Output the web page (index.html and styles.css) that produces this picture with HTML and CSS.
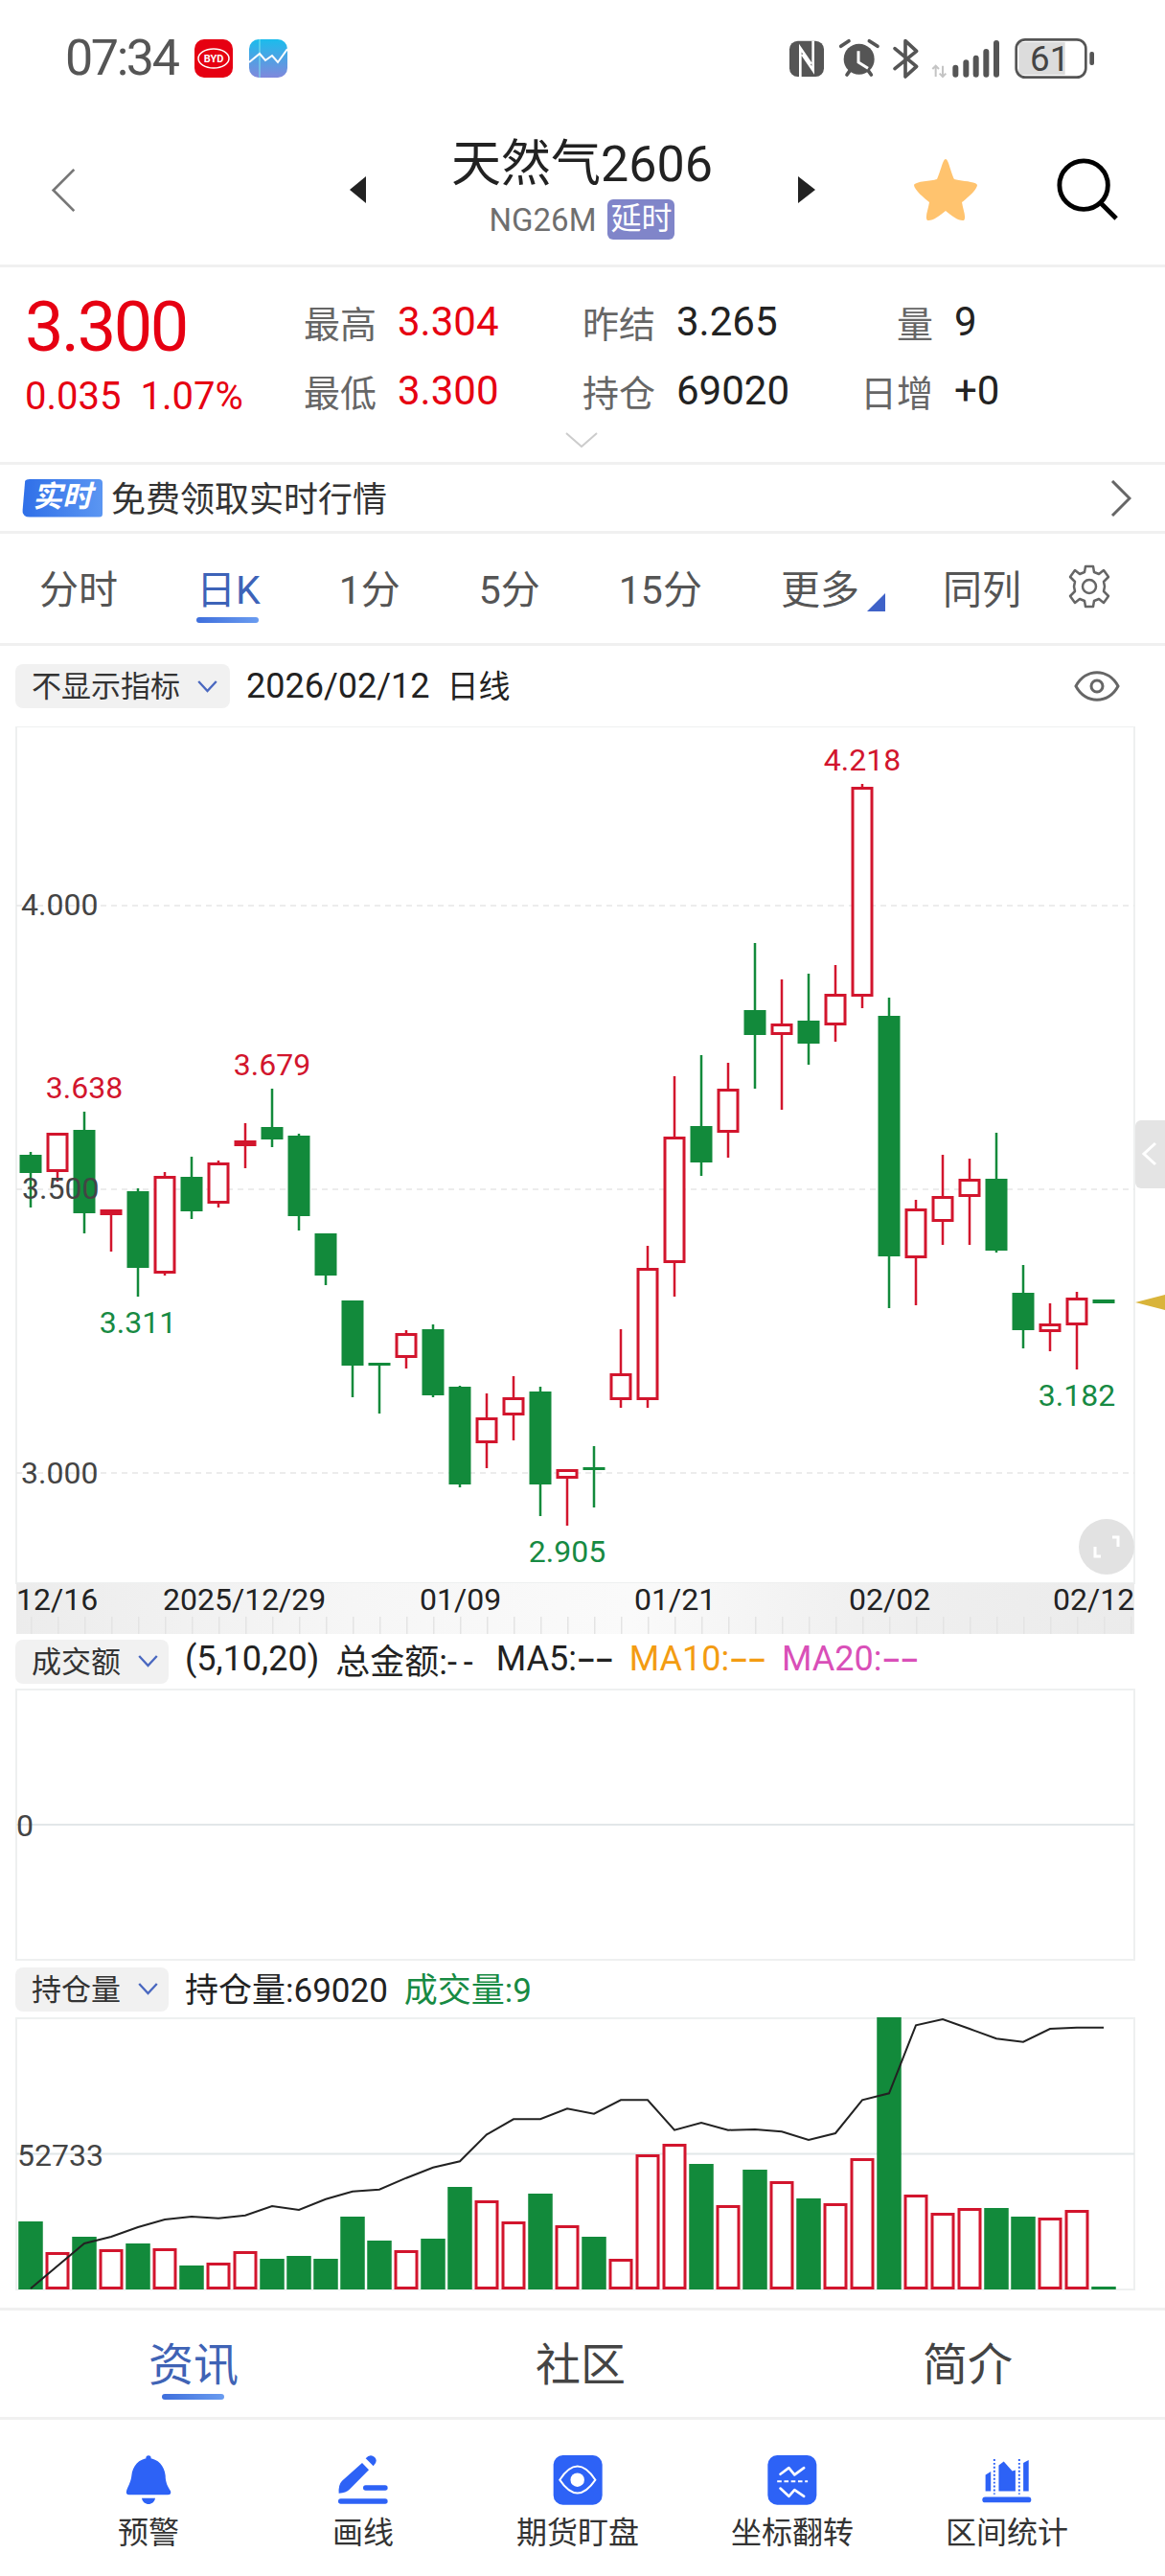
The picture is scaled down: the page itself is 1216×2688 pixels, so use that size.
FILE: index.html
```html
<!DOCTYPE html>
<html lang="zh-CN">
<head>
    <meta charset="UTF-8">
    <meta name="viewport" content="width=device-width, initial-scale=1.0">
    <title>天然气2606</title>
    <link rel="stylesheet" href="styles.css">
</head>
<body>
    <!-- Status Bar -->
    <div class="status-bar">
        <div class="status-left">
            <span class="clock">07:34</span>
            <svg class="app-icon" viewBox="0 0 40 40">
                <rect width="40" height="40" rx="10" fill="#e60012"/>
                <ellipse cx="20" cy="20" rx="16" ry="10" fill="none" stroke="#fff" stroke-width="1.5"/>
                <text class="byd-text" x="20" y="24" text-anchor="middle">BYD</text>
            </svg>
            <svg class="app-icon" viewBox="0 0 40 40">
                <defs>
                    <linearGradient id="stockBg" x1="0" y1="0" x2="0" y2="1">
                        <stop offset="0" stop-color="#1bbcec"/>
                        <stop offset="1" stop-color="#8088dc"/>
                    </linearGradient>
                </defs>
                <rect width="40" height="40" rx="10" fill="url(#stockBg)"/>
                <path d="M11 0V40" stroke="#7fe6ee" stroke-width="1"/>
                <path d="M0 24L11 15L17 22L24 17L30 24L40 10" fill="none" stroke="#fff" stroke-width="2"/>
            </svg>
        </div>
        <svg class="status-icons" viewBox="0 0 1020 180">
            <rect x="42" y="38" width="108" height="112" rx="26" fill="#555"/>
            <path d="M76 150V60L110 110M116 38V130L82 80" fill="none" stroke="#fff" stroke-width="8"/>
            <circle cx="260" cy="95" r="48" fill="#555"/>
            <path d="M203 55L228 38M292 38L318 55M222 144L232 130M298 144L288 130" stroke="#555" stroke-width="11" stroke-linecap="round"/>
            <path d="M258 70V105L288 124" fill="none" stroke="#fff" stroke-width="9"/>
            <path d="M372 62L440 118L405 150V38L440 70L372 125" fill="none" stroke="#555" stroke-width="11" stroke-linecap="round" stroke-linejoin="round"/>
            <path d="M500 150V116M490 126L500 116L510 126M522 116V150M512 140L522 150L532 140" fill="none" stroke="#c4c4c4" stroke-width="6"/>
            <path d="M562 122V143M595 106V143M626 92V143M658 72V143M690 45V143" stroke="#555" stroke-width="18" stroke-linecap="round"/>
            <rect x="760" y="42" width="145" height="102" fill="#dcdcdc"/>
            <rect x="752" y="34" width="218" height="118" rx="28" fill="none" stroke="#555" stroke-width="8"/>
            <text class="battery-text" x="857" y="133" text-anchor="middle">61</text>
            <rect x="982" y="72" width="14" height="42" rx="6" fill="#555"/>
        </svg>
    </div>

    <!-- Header -->
    <header class="top-header">
        <svg class="back-icon" viewBox="0 0 30 52">
            <path d="M27 2L3 26L27 50" fill="none" stroke="#777" stroke-width="3"/>
        </svg>
        <div class="title-group">
            <span class="arrow-left"></span>
            <div class="title-block">
                <h1>天然气2606</h1>
                <div class="code-line">
                    <span>NG26M</span>
                    <span class="delay-tag">延时</span>
                </div>
            </div>
            <span class="arrow-right"></span>
        </div>
        <div class="header-actions">
            <svg class="star-icon" viewBox="0 0 66 66">
                <path d="M33 1C36 1 38 14 42 22C48 24 64 24 66 28C66 33 55 42 50 46C51 53 55 62 52 65C47 66 39 60 33 55C27 60 19 66 14 65C11 62 15 53 16 46C11 42 0 33 0 28C2 24 18 24 24 22C28 14 30 1 33 1Z" fill="#ffc36e"/>
            </svg>
            <svg class="search-icon" viewBox="0 0 68 68">
                <circle cx="30" cy="29" r="26" fill="none" stroke="#000" stroke-width="5"/>
                <path d="M49 49L65 65" stroke="#000" stroke-width="5"/>
            </svg>
        </div>
    </header>

    <!-- Quote -->
    <section class="quote">
        <div class="quote-main">
            <div class="price">3.300</div>
            <div class="change"><span>0.035</span><span>1.07%</span></div>
        </div>
        <div class="quote-grid">
            <span class="q-label">最高</span><span class="q-value red">3.304</span>
            <span class="q-label">昨结</span><span class="q-value">3.265</span>
            <span class="q-label">量</span><span class="q-value">9</span>
            <span class="q-label">最低</span><span class="q-value red">3.300</span>
            <span class="q-label">持仓</span><span class="q-value">69020</span>
            <span class="q-label">日增</span><span class="q-value">+0</span>
        </div>
        <svg class="quote-more" viewBox="0 0 34 16">
            <path d="M1 1L17 15L33 1" fill="none" stroke="#ccc" stroke-width="2"/>
        </svg>
    </section>

    <!-- Realtime Banner -->
    <div class="banner">
        <span class="realtime-tag">实时</span>
        <span class="banner-text">免费领取实时行情</span>
        <svg class="banner-arrow" viewBox="0 0 22 38">
            <path d="M2 1L20 19L2 37" fill="none" stroke="#666" stroke-width="3"/>
        </svg>
    </div>

    <!-- Period Tabs -->
    <nav class="period-tabs">
        <a>分时</a>
        <a class="active">日K</a>
        <a>1分</a>
        <a>5分</a>
        <a>15分</a>
        <a class="more">更多</a>
        <a>同列</a>
        <svg class="gear-icon" viewBox="0 0 46 46">
            <path d="M19 2H27L28 8L33 10L38 6L43 13L38 18L39 23L38 28L43 33L38 40L33 36L28 38L27 44H19L18 38L13 36L8 40L3 33L8 28L7 23L8 18L3 13L8 6L13 10L18 8Z" fill="none" stroke="#666" stroke-width="2.5" stroke-linejoin="round"/>
            <circle cx="23" cy="23" r="7" fill="none" stroke="#666" stroke-width="2.5"/>
        </svg>
    </nav>

    <!-- Indicator Row -->
    <div class="info-row first">
        <div class="chip wide"><span class="chip-text">不显示指标</span><svg class="chip-arrow" viewBox="0 0 24 14"><path d="M2 1L12 12L22 1" fill="none" stroke="#4a68c0" stroke-width="2.5"/></svg></div>
        <span class="date-text">2026/02/12<span class="date-unit">日线</span></span>
        <svg class="eye-icon" viewBox="0 0 48 32">
            <path d="M2 16C12 -3 36 -3 46 16C36 35 12 35 2 16Z" fill="none" stroke="#666" stroke-width="3"/>
            <circle cx="24" cy="16" r="6" fill="none" stroke="#666" stroke-width="3"/>
        </svg>
    </div>

    <!-- Candle Chart -->
    <svg class="chart chart-main" viewBox="0 758 1216 947">
        <defs>
            <linearGradient id="axisBg" x1="0" y1="0" x2="1" y2="0">
                <stop offset="0" stop-color="#ececec"/>
                <stop offset="0.3" stop-color="#f6f6f6"/>
                <stop offset="0.55" stop-color="#fafafa"/>
                <stop offset="0.75" stop-color="#f0f0f0"/>
                <stop offset="1" stop-color="#ebebeb"/>
            </linearGradient>
            <pattern id="axisTicks" x="32" y="1687" width="28" height="18" patternUnits="userSpaceOnUse">
                <rect width="1.5" height="18" fill="#e4e4e4"/>
            </pattern>
        </defs>
        <rect class="frame" x="17" y="758" width="1167" height="894"/>
        <path class="grid-dash" d="M17 945H1184M17 1241H1184M17 1537H1184"/>

        <path class="wick-down" d="M32 1202V1260M88 1160V1287M144 1240V1353M200 1207V1272M284 1136V1197M312 1183V1284M340 1287V1341M368 1357V1458M396 1422V1475M452 1382V1458M480 1446V1552M564 1447V1582M620 1509V1573M732 1101V1227M788 984V1136M844 1016V1111M928 1041V1365M1040 1182V1307M1068 1320V1407"/>
        <path class="wick-up" d="M60 1182V1233M116 1262V1306M172 1223V1331M228 1211V1260M256 1172V1219M424 1388V1428M508 1454V1532M536 1436V1503M592 1533V1592M648 1387V1469M676 1300V1469M704 1123V1353M760 1109V1208M816 1022V1158M872 1007V1087M900 818V1052M956 1252V1362M984 1205V1299M1012 1209V1299M1096 1360V1410M1124 1348V1429"/>

        <g class="down">
            <rect x="20.5" y="1205" width="23" height="19"/>
            <rect x="76.5" y="1179" width="23" height="87"/>
            <rect x="132.5" y="1243" width="23" height="80"/>
            <rect x="188.5" y="1228" width="23" height="36"/>
            <rect x="272.5" y="1176" width="23" height="13"/>
            <rect x="300.5" y="1185" width="23" height="84"/>
            <rect x="328.5" y="1287" width="23" height="44"/>
            <rect x="356.5" y="1357" width="23" height="68"/>
            <rect x="384.5" y="1422" width="23" height="3"/>
            <rect x="440.5" y="1387" width="23" height="69"/>
            <rect x="468.5" y="1447" width="23" height="102"/>
            <rect x="552.5" y="1452" width="23" height="97"/>
            <rect x="608.5" y="1531" width="23" height="3"/>
            <rect x="720.5" y="1175" width="23" height="38"/>
            <rect x="776.5" y="1054" width="23" height="26"/>
            <rect x="832.5" y="1065" width="23" height="24"/>
            <rect x="916.5" y="1060" width="23" height="251"/>
            <rect x="1028.5" y="1230" width="23" height="75"/>
            <rect x="1056.5" y="1349" width="23" height="39"/>
            <rect x="1140.5" y="1356" width="23" height="4"/>
        </g>
        <g class="up">
            <rect x="50" y="1183.5" width="20" height="38"/>
            <rect x="106" y="1263.5" width="20" height="3"/>
            <rect x="162" y="1228.5" width="20" height="99"/>
            <rect x="218" y="1214.5" width="20" height="40"/>
            <rect x="246" y="1191.5" width="20" height="3"/>
            <rect x="414" y="1392.5" width="20" height="23"/>
            <rect x="498" y="1480.5" width="20" height="24"/>
            <rect x="526" y="1459.5" width="20" height="16"/>
            <rect x="582" y="1534.5" width="20" height="7"/>
            <rect x="638" y="1434.5" width="20" height="25"/>
            <rect x="666" y="1324.5" width="20" height="135"/>
            <rect x="694" y="1187.5" width="20" height="129"/>
            <rect x="750" y="1137.5" width="20" height="43"/>
            <rect x="806" y="1069.5" width="20" height="9"/>
            <rect x="862" y="1038.5" width="20" height="30"/>
            <rect x="890" y="822.5" width="20" height="216"/>
            <rect x="946" y="1262.5" width="20" height="49"/>
            <rect x="974" y="1249.5" width="20" height="24"/>
            <rect x="1002" y="1231.5" width="20" height="16"/>
            <rect x="1086" y="1382.5" width="20" height="6"/>
            <rect x="1114" y="1355.5" width="20" height="26"/>
        </g>

        <text class="axis-value" x="22" y="955">4.000</text>
        <text class="axis-value" x="23" y="1251">3.500</text>
        <text class="axis-value" x="22" y="1548">3.000</text>

        <text class="mark red-text" x="88" y="1146">3.638</text>
        <text class="mark red-text" x="284" y="1122">3.679</text>
        <text class="mark red-text" x="900" y="804">4.218</text>
        <text class="mark green-text" x="144" y="1391">3.311</text>
        <text class="mark green-text" x="1124" y="1467">3.182</text>
        <text class="mark green-text" x="592" y="1630">2.905</text>

        <!-- Overlays on the chart -->
        <rect class="side-tab" x="1185" y="1169" width="40" height="71" rx="6"/>
        <path d="M1206 1193L1194 1204L1206 1215" fill="none" stroke="#fff" stroke-width="3"/>
        <polygon points="1216,1351 1185,1359 1216,1367" fill="#d9b43a"/>
        <circle cx="1155" cy="1614" r="29" fill="#e2e2e2"/>
        <path d="M1161 1604H1167V1614M1149 1624H1143V1614" fill="none" stroke="#fff" stroke-width="3"/>

        <!-- Date Axis -->
        <rect x="17" y="1652" width="1167" height="53" fill="url(#axisBg)"/>
        <rect x="17" y="1687" width="1167" height="18" fill="url(#axisTicks)"/>
        <text class="axis-date" x="17" y="1680">12/16</text>
        <text class="axis-date" x="170" y="1680">2025/12/29</text>
        <text class="axis-date" x="438" y="1680">01/09</text>
        <text class="axis-date" x="662" y="1680">01/21</text>
        <text class="axis-date" x="886" y="1680">02/02</text>
        <text class="axis-date" x="1099" y="1680">02/12</text>
    </svg>

    <!-- Turnover -->
    <div class="info-row short">
        <div class="chip"><span class="chip-text">成交额</span><svg class="chip-arrow" viewBox="0 0 24 14"><path d="M2 1L12 12L22 1" fill="none" stroke="#4a68c0" stroke-width="2.5"/></svg></div>
        <span class="legend">(5,10,20)</span>
        <span class="legend">总金额:<span class="dash-thin">--</span></span>
        <span class="legend">MA5:<span class="dash">––</span></span>
        <span class="legend orange">MA10:<span class="dash">––</span></span>
        <span class="legend pink">MA20:<span class="dash">––</span></span>
    </div>
    <svg class="chart chart-sub" viewBox="0 1762 1216 284">
        <rect class="frame" x="17" y="1763" width="1167" height="282"/>
        <path class="grid-solid" d="M17 1904H1184"/>
        <text class="axis-value" x="17" y="1916">0</text>
    </svg>

    <!-- Open Interest -->
    <div class="info-row">
        <div class="chip"><span class="chip-text">持仓量</span><svg class="chip-arrow" viewBox="0 0 24 14"><path d="M2 1L12 12L22 1" fill="none" stroke="#4a68c0" stroke-width="2.5"/></svg></div>
        <span class="legend oi">持仓量:69020</span>
        <span class="legend oi green">成交量:9</span>
    </div>
    <svg class="chart chart-oi" viewBox="0 2105 1216 303">
        <rect class="frame" x="17" y="2106" width="1167" height="283"/>
        <path class="grid-solid" d="M17 2247.5H1184"/>
        <g class="down">
            <rect x="19.25" y="2318" width="25.5" height="71"/>
            <rect x="75.25" y="2334" width="25.5" height="55"/>
            <rect x="131.25" y="2341" width="25.5" height="48"/>
            <rect x="187.25" y="2364" width="25.5" height="25"/>
            <rect x="271.25" y="2357" width="25.5" height="32"/>
            <rect x="299.25" y="2354" width="25.5" height="35"/>
            <rect x="327.25" y="2357" width="25.5" height="32"/>
            <rect x="355.25" y="2313" width="25.5" height="76"/>
            <rect x="383.25" y="2338" width="25.5" height="51"/>
            <rect x="439.25" y="2336" width="25.5" height="53"/>
            <rect x="467.25" y="2282" width="25.5" height="107"/>
            <rect x="551.25" y="2289" width="25.5" height="100"/>
            <rect x="607.25" y="2334" width="25.5" height="55"/>
            <rect x="719.25" y="2258" width="25.5" height="131"/>
            <rect x="775.25" y="2264" width="25.5" height="125"/>
            <rect x="831.25" y="2294" width="25.5" height="95"/>
            <rect x="915.25" y="2105" width="25.5" height="284"/>
            <rect x="1027.25" y="2304" width="25.5" height="85"/>
            <rect x="1055.25" y="2313" width="25.5" height="76"/>
            <rect x="1139.25" y="2386" width="25.5" height="3"/>
        </g>
        <g class="up">
            <rect x="49" y="2351.5" width="22" height="36"/>
            <rect x="105" y="2348.5" width="22" height="39"/>
            <rect x="161" y="2347.5" width="22" height="40"/>
            <rect x="217" y="2362.5" width="22" height="25"/>
            <rect x="245" y="2350.5" width="22" height="37"/>
            <rect x="413" y="2349.5" width="22" height="38"/>
            <rect x="497" y="2297.5" width="22" height="90"/>
            <rect x="525" y="2319.5" width="22" height="68"/>
            <rect x="581" y="2323.5" width="22" height="64"/>
            <rect x="637" y="2358.5" width="22" height="29"/>
            <rect x="665" y="2249.5" width="22" height="138"/>
            <rect x="693" y="2238.5" width="22" height="149"/>
            <rect x="749" y="2302.5" width="22" height="85"/>
            <rect x="805" y="2277.5" width="22" height="110"/>
            <rect x="861" y="2300.5" width="22" height="87"/>
            <rect x="889" y="2253.5" width="22" height="134"/>
            <rect x="945" y="2291.5" width="22" height="96"/>
            <rect x="973" y="2310.5" width="22" height="77"/>
            <rect x="1001" y="2305.5" width="22" height="82"/>
            <rect x="1085" y="2315.5" width="22" height="72"/>
            <rect x="1113" y="2307.5" width="22" height="80"/>
        </g>
        <polyline class="oi-line" points="32,2388 88,2341 116,2334 144,2324 172,2316 200,2313 228,2314.7 256,2311.7 284,2302 312,2306 340,2294.7 368,2286.7 396,2284.7 424,2272.7 452,2261.7 480,2255.3 508,2227.3 536,2211.3 564,2211.3 592,2200.3 620,2205.7 648,2191.3 676,2191.3 704,2222.7 732,2215 760,2222.7 788,2222 816,2224.3 844,2233 872,2226 900,2191.3 928,2184.3 956,2113.3 984,2107 1012,2117 1040,2127.3 1068,2130.7 1096,2117 1124,2115.7 1152,2115.7"/>
        <text class="axis-value" x="18" y="2260">52733</text>
    </svg>

    <!-- Content Tabs -->
    <nav class="content-tabs">
        <a class="active">资讯</a>
        <a>社区</a>
        <a>简介</a>
    </nav>

    <!-- Tools -->
    <footer class="tool-bar">
        <div class="tool">
            <svg class="tool-icon" viewBox="30 36 150 156">
                <circle cx="105" cy="45" r="8"/>
                <path d="M105 46C75 46 55 70 52 100C50 120 40 135 36 148Q33 160 45 160H165Q178 160 174 148C165 135 158 120 158 100C155 70 135 46 105 46Z"/>
                <path d="M84 170H126C122 195 88 195 84 170Z"/>
            </svg>
            <span>预警</span>
        </div>
        <div class="tool">
            <svg class="tool-icon" viewBox="700 38 156 156">
                <path d="M775 62L796 84L735 145Q725 155 702 157Q700 130 712 118Z"/>
                <path d="M786 48Q800 32 814 44Q826 56 810 72Z"/>
                <rect x="778" y="132" width="77" height="16" rx="8"/>
                <rect x="700" y="174" width="155" height="16" rx="8"/>
            </svg>
            <span>画线</span>
        </div>
        <div class="tool">
            <svg class="tool-icon" viewBox="20 20 158 158">
                <rect x="22" y="20" width="155" height="157" rx="30"/>
                <path d="M42 98Q98 12 155 98Q98 182 42 98Z" fill="none" stroke="#fff" stroke-width="6"/>
                <circle cx="98" cy="98" r="22" fill="#fff"/>
            </svg>
            <span>期货盯盘</span>
        </div>
        <div class="tool">
            <svg class="tool-icon" viewBox="692 20 158 158">
                <rect x="693" y="20" width="155" height="157" rx="30"/>
                <path d="M733 80L760 60L778 82L808 60M733 125L760 150L778 130L808 150" fill="none" stroke="#fff" stroke-width="8" stroke-linecap="round" stroke-linejoin="round"/>
                <path d="M723 103H820" stroke="#fff" stroke-width="6" stroke-dasharray="14 8"/>
            </svg>
            <span>坐标翻转</span>
        </div>
        <div class="tool">
            <svg class="tool-icon" viewBox="1364 18 158 158">
                <path d="M1375 80L1392 70V132H1375ZM1417 50L1433 38L1460 68L1470 65V132H1417ZM1495 42L1512 33V132H1495Z"/>
                <path d="M1403 30V142M1482 30V142" fill="none" stroke="#2d62f6" stroke-width="6" stroke-dasharray="6 6"/>
                <rect x="1365" y="150" width="155" height="18" rx="9"/>
            </svg>
            <span>区间统计</span>
        </div>
    </footer>
</body>
</html>
```

FILE: styles.css
```css
/* General Styling */
html, body {
    margin: 0;
    padding: 0;
    background: #fff;
    color: #222;
    font-family: Roboto, "Noto Sans CJK SC", sans-serif;
}

body {
    width: 1216px;
    height: 2688px;
    overflow: hidden;
}

svg {
    display: block;
}

/* Status Bar */
.status-bar {
    height: 120px;
    display: flex;
    justify-content: space-between;
    padding: 30px 66px 0 68px;
    box-sizing: border-box;
}

.status-left {
    display: flex;
    align-items: flex-start;
    height: 60px;
}

.clock {
    width: 135px;
    font-size: 52px;
    line-height: 62px;
    letter-spacing: -2.4px;
    color: #555;
}

.app-icon {
    width: 40px;
    height: 40px;
    margin: 11px 17px 0 0;
}

.byd-text {
    font-size: 11px;
    font-weight: 700;
    fill: #fff;
}

.status-icons {
    width: 340px;
    height: 60px;
}

.battery-text {
    font-size: 110px;
    fill: #444;
}

/* Header */
.top-header {
    height: 159px;
    box-sizing: border-box;
    border-bottom: 3px solid #f0f0f0;
    display: grid;
    grid-template-columns: 1fr 486px 1fr;
    align-items: center;
}

.back-icon {
    width: 27px;
    height: 49px;
    margin-left: 53px;
}

.title-group {
    display: flex;
    justify-content: space-between;
    align-items: center;
}

.arrow-left,
.arrow-right {
    width: 0;
    height: 0;
    border-top: 14px solid transparent;
    border-bottom: 14px solid transparent;
}

.arrow-left {
    border-right: 17px solid #222;
}

.arrow-right {
    border-left: 18px solid #222;
}

.title-block {
    text-align: center;
    margin-top: -4px;
}

.title-block h1 {
    margin: 0;
    font-size: 52px;
    font-weight: 400;
    line-height: 60px;
}

.code-line {
    display: flex;
    justify-content: center;
    align-items: center;
    gap: 12px;
    font-size: 33px;
    color: #6f6f6f;
    margin-top: 6px;
}

.delay-tag {
    padding: 0 3px;
    height: 42px;
    line-height: 40px;
    font-size: 32px;
    background: #8085c9;
    color: #fff;
    border-radius: 6px;
}

.header-actions {
    display: flex;
    justify-content: flex-end;
    align-items: center;
    gap: 82px;
    padding-right: 48px;
}

.star-icon,
.search-icon {
    width: 66px;
    height: 66px;
}

/* Quote */
.quote {
    position: relative;
    height: 206px;
    box-sizing: border-box;
    border-bottom: 3px solid #f0f0f0;
    display: flex;
    padding: 27px 0 0 26px;
}

.quote-main {
    width: 289px;
}

.price {
    font-size: 72px;
    font-weight: 400;
    line-height: 72px;
    letter-spacing: -2.4px;
    color: #e60012;
}

.change {
    display: flex;
    gap: 20px;
    margin-top: 13px;
    font-size: 40px;
    line-height: 46px;
    color: #e60012;
}

.quote-grid {
    display: grid;
    grid-template-columns: 78px 213px 78px 212px 78px auto;
    grid-auto-rows: 72px;
    align-items: center;
    margin-top: -7px;
}

.q-label {
    font-size: 38px;
    color: #666;
    text-align: right;
}

.q-value {
    font-size: 42px;
    padding-left: 22px;
    color: #222;
}

.q-value.red {
    color: #e60012;
}

.quote-more {
    position: absolute;
    left: 590px;
    top: 172px;
    width: 34px;
    height: 16px;
}

/* Realtime Banner */
.banner {
    height: 72px;
    box-sizing: border-box;
    border-bottom: 3px solid #f0f0f0;
    display: flex;
    align-items: center;
    padding: 0 35px 0 23px;
}

.realtime-tag {
    width: 84px;
    height: 40px;
    line-height: 38px;
    text-align: center;
    font-size: 31px;
    font-weight: 700;
    font-style: italic;
    color: #fff;
    background: linear-gradient(90deg, #2f6fe8, #5b96f2);
    border-radius: 8px 4px 4px 8px;
    clip-path: polygon(4% 0, 100% 0, 102% 100%, 0 100%);
}

.banner-text {
    margin: -4px 0 0 9px;
    font-size: 36px;
    color: #333;
}

.banner-arrow {
    margin-left: auto;
    width: 22px;
    height: 38px;
}

/* Period Tabs */
.period-tabs {
    height: 117px;
    box-sizing: border-box;
    border-bottom: 3px solid #f0f0f0;
    display: flex;
    align-items: center;
    gap: 82px;
    padding: 0 0 4px 41px;
    font-size: 41px;
    color: #555;
}

.period-tabs a {
    position: relative;
}

.period-tabs a.active {
    color: #3d63b8;
}

.period-tabs a.active::after {
    content: "";
    position: absolute;
    left: 0;
    right: 2px;
    bottom: -8px;
    height: 6px;
    border-radius: 3px;
    background: linear-gradient(90deg, #3f6fdc, #6a9cf0);
}

.period-tabs a.more {
    margin-right: 5px;
}

.period-tabs a.more::after {
    content: "";
    position: absolute;
    right: -27px;
    bottom: 4px;
    border-left: 19px solid transparent;
    border-bottom: 19px solid #3f62c8;
}

.gear-icon {
    width: 46px;
    height: 46px;
    margin-left: -34px;
}

/* Info Rows */
.info-row {
    height: 59px;
    box-sizing: border-box;
    display: flex;
    align-items: center;
    padding-left: 16px;
    font-size: 36px;
}

.info-row.short {
    height: 57px;
}

.info-row.first {
    height: 84px;
    padding-right: 47px;
}

.chip {
    width: 160px;
    height: 46px;
    box-sizing: border-box;
    display: flex;
    align-items: center;
    padding-left: 17px;
    background: #f1f1f1;
    border-radius: 8px;
    font-size: 31px;
    color: #333;
}

.chip.wide {
    width: 224px;
}

.chip-text {
    margin-top: -5px;
}

.chip-arrow {
    margin-left: 17px;
    width: 23px;
    height: 13px;
}

.date-text {
    margin: -5px 0 0 17px;
    font-size: 36px;
    color: #222;
}

.date-unit {
    margin-left: 18px;
    font-size: 33px;
}

.eye-icon {
    margin-left: auto;
    width: 48px;
    height: 32px;
}

.legend {
    margin: -5px 0 0 17px;
    color: #222;
}

.legend.oi {
    font-size: 35px;
}

.legend .dash {
    font-size: 30px;
    font-weight: 700;
}

.legend .dash-thin {
    letter-spacing: 7px;
}

.legend.orange {
    color: #f39c12;
}

.legend.pink {
    color: #d94fb8;
}

.legend.green {
    color: #178a43;
}

/* Charts */
.chart {
    width: 1216px;
}

.chart-main {
    height: 947px;
}

.chart-sub {
    height: 284px;
}

.chart-oi {
    height: 303px;
}

.frame {
    fill: none;
    stroke: #eef0f0;
    stroke-width: 2;
}

.grid-dash {
    stroke: #e6e6e6;
    stroke-width: 1.5;
    stroke-dasharray: 6 5;
}

.grid-solid {
    stroke: #e2e7e9;
    stroke-width: 2;
}

.wick-down,
.wick-up {
    fill: none;
    stroke-width: 2.5;
}

.wick-down {
    stroke: #128a3b;
}

.wick-up {
    stroke: #d2152d;
}

.down rect {
    fill: #128a3b;
}

.up rect {
    fill: #fff;
    stroke: #d2152d;
    stroke-width: 3;
}

.axis-value,
.axis-date,
.mark {
    font-size: 32px;
}

.axis-value {
    fill: #444;
}

.axis-date {
    fill: #222;
}

.mark {
    text-anchor: middle;
}

.red-text {
    fill: #d2152d;
}

.green-text {
    fill: #178a43;
}

.side-tab {
    fill: #e4e4e4;
}

.oi-line {
    fill: none;
    stroke: #222;
    stroke-width: 2;
}

/* Content Tabs */
.content-tabs {
    height: 117px;
    box-sizing: border-box;
    border-top: 3px solid #f0f0f0;
    border-bottom: 3px solid #f0f0f0;
    display: grid;
    grid-template-columns: repeat(3, 1fr);
    align-items: center;
    padding: 0 4px 7px 0;
    text-align: center;
    font-size: 47px;
    color: #444;
}

.content-tabs a {
    position: relative;
}

.content-tabs a.active {
    color: #3f63b5;
}

.content-tabs a.active::after {
    content: "";
    position: absolute;
    left: calc(50% - 33px);
    bottom: -6px;
    width: 65px;
    height: 6px;
    border-radius: 3px;
    background: linear-gradient(90deg, #3f6fdc, #6a9cf0);
}

/* Tools */
.tool-bar {
    display: grid;
    grid-template-columns: repeat(5, 224px);
    padding: 37px 0 0 43px;
}

.tool {
    display: flex;
    flex-direction: column;
    align-items: center;
    font-size: 32px;
    color: #333;
}

.tool-icon {
    width: 52px;
    height: 52px;
    fill: #2d62f6;
    margin-bottom: 3px;
}
```
